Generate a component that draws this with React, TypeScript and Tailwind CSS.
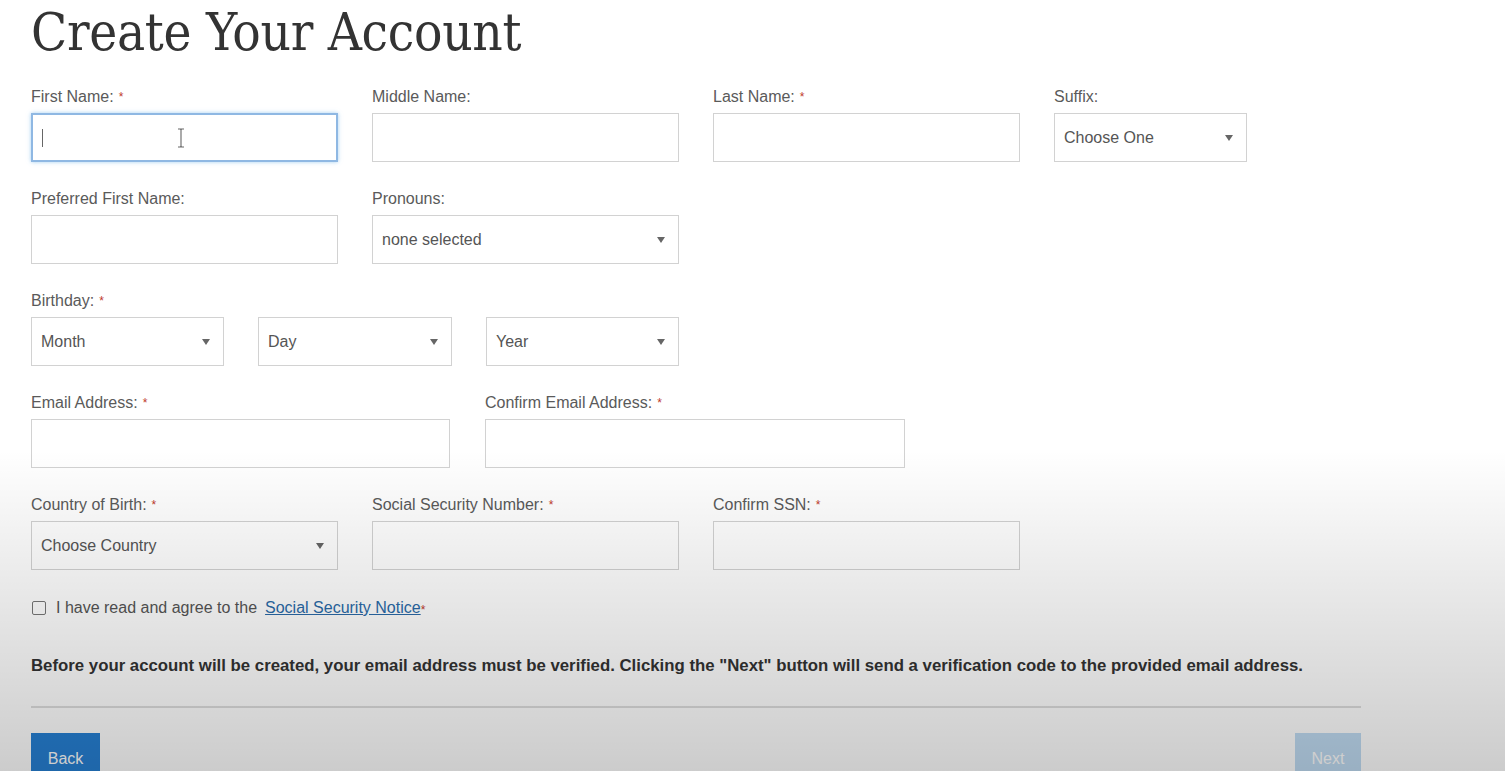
import React from "react";

const sans = { fontFamily: '"Liberation Sans", Arial, sans-serif' };

function Label({ text, req }: { text: string; req?: boolean }) {
  return (
    <div className="h-[22px] leading-[22px] text-[16px] text-[#5a5a5a] mb-[5px] whitespace-nowrap">
      {text}
      {req && <span className="text-[#c0392b] text-[12px] align-top ml-[5px]">*</span>}
    </div>
  );
}

function Input({ w, focus }: { w: string; focus?: boolean }) {
  return (
    <div
      className={
        "h-[49px] bg-white relative " +
        w +
        (focus
          ? " border-2 border-[#8fb8e3] shadow-[0_0_4px_rgba(102,175,233,0.6)]"
          : " border border-[#d2d2d2]")
      }
    >
      {focus && (
        <>
          <span className="absolute left-[9px] top-[14px] w-px h-[18px] bg-[#666]" />
          <svg className="absolute left-[144px] top-[13px]" width="8" height="20" viewBox="0 0 8 20">
            <path d="M1 1h2.5l0.5 1 0.5-1H7M4 2v16M1 19h2.5l0.5-1 0.5 1H7" fill="none" stroke="#666" strokeWidth="1.1" />
          </svg>
        </>
      )}
    </div>
  );
}

function Select({ w, text }: { w: string; text: string }) {
  return (
    <div className={"h-[49px] bg-white border border-[#d2d2d2] flex items-center justify-between pl-[9px] pr-[13px] " + w}>
      <span className="text-[16px] text-[#555]">{text}</span>
      <svg width="8" height="6" viewBox="0 0 8 6">
        <path d="M0 0h8L4 6z" fill="#666" />
      </svg>
    </div>
  );
}

function Field({ label, req, children }: { label: string; req?: boolean; children: React.ReactNode }) {
  return (
    <div className="flex flex-col">
      <Label text={label} req={req} />
      {children}
    </div>
  );
}

export default function App() {
  return (
    <div className="relative w-[1505px] h-[771px] overflow-hidden bg-white" style={sans}>
      <div className="pl-[31px] w-[1361px]">
        <h1
          className="h-[86px] pt-[2px] text-[52.6px] leading-[60px] text-[#333] font-normal tracking-[-0.3px]"
          style={{ fontFamily: '"DejaVu Serif Condensed", "DejaVu Serif", serif', fontStretch: "condensed" }}
        >
          Create Your Account
        </h1>

        <div className="flex gap-[34px] mb-[26px]">
          <Field label="First Name:" req>
            <Input w="w-[307px]" focus />
          </Field>
          <Field label="Middle Name:">
            <Input w="w-[307px]" />
          </Field>
          <Field label="Last Name:" req>
            <Input w="w-[307px]" />
          </Field>
          <Field label="Suffix:">
            <Select w="w-[193px]" text="Choose One" />
          </Field>
        </div>

        <div className="flex gap-[34px] mb-[26px]">
          <Field label="Preferred First Name:">
            <Input w="w-[307px]" />
          </Field>
          <Field label="Pronouns:">
            <Select w="w-[307px]" text="none selected" />
          </Field>
        </div>

        <div className="flex flex-col mb-[26px]">
          <Label text="Birthday:" req />
          <div className="flex gap-[34px]">
            <Select w="w-[193px]" text="Month" />
            <Select w="w-[194px]" text="Day" />
            <Select w="w-[193px]" text="Year" />
          </div>
        </div>

        <div className="flex gap-[35px] mb-[26px]">
          <Field label="Email Address:" req>
            <Input w="w-[419px]" />
          </Field>
          <Field label="Confirm Email Address:" req>
            <Input w="w-[420px]" />
          </Field>
        </div>

        <div className="flex gap-[34px]">
          <Field label="Country of Birth:" req>
            <Select w="w-[307px]" text="Choose Country" />
          </Field>
          <Field label="Social Security Number:" req>
            <Input w="w-[307px]" />
          </Field>
          <Field label="Confirm SSN:" req>
            <Input w="w-[307px]" />
          </Field>
        </div>

        <div className="flex items-center mt-[31px] h-[14px] text-[16px] text-[#555]">
          <span className="w-[14px] h-[14px] border border-[#777] rounded-[2px] bg-white ml-[1px] mr-[10px]" />
          <span>I have read and agree to the </span>
          <span className="ml-[8px] text-[#2a6aa8] underline">Social Security Notice</span>
          <span className="text-[#c0392b] text-[12px] self-start">*</span>
        </div>

        <p className="mt-[41px] text-[16.8px] font-bold text-[#333] leading-[20px] whitespace-nowrap">
          Before your account will be created, your email address must be verified. Clicking the "Next" button will send a verification code to the provided email address.
        </p>

        <div className="mt-[30px] border-t-2 border-[#dedede]" />

        <div className="flex justify-between mt-[25px]">
          <div className="w-[69px] h-[52px] bg-[#2680d4] text-white text-[16px] flex items-center justify-center">
            Back
          </div>
          <div className="w-[66px] h-[52px] bg-[#c0dcf3] text-white text-[16px] flex items-center justify-center">
            Next
          </div>
        </div>
      </div>

      <div className="pointer-events-none absolute inset-0 bg-[linear-gradient(to_bottom,rgba(0,0,0,0)_0px,rgba(0,0,0,0)_450px,rgba(0,0,0,0.07)_560px,rgba(0,0,0,0.2)_771px)]" />
    </div>
  );
}
